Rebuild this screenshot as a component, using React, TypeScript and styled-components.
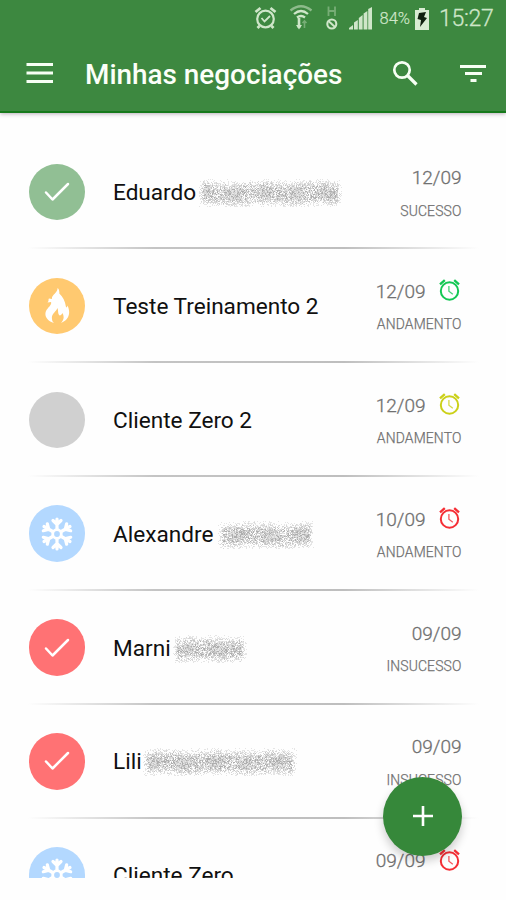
import React from "react";
import styled, { createGlobalStyle } from "styled-components";

const Global = createGlobalStyle`
  * { box-sizing: border-box; }
  body { margin: 0; background: #fff; font-family: Roboto, sans-serif; }
  svg { display: block; flex: none; }
`;

const Screen = styled.div`
  position: relative;
  width: 506px;
  height: 900px;
  overflow: hidden;
  background: #fefefe;
`;

const Header = styled.header`
  height: 113px;
  background: #3d8840;
  border-bottom: 2px solid #177a1c;
  box-shadow: 0 1px 4px rgba(60, 30, 60, 0.35);
`;

const StatusBar = styled.div`
  display: flex;
  align-items: center;
  height: 37px;
  padding-left: 253px;
  color: #cfe6c9;
`;

const Battery = styled.span`
  width: 32px;
  margin-left: 4.5px;
  font-size: 16.5px;
  font-weight: 300;
  -webkit-text-stroke: 0.2px #cfe6c9;
  white-space: nowrap;
`;

const BatteryIcon = styled.svg`
  margin-left: 3px;
`;

const Clock = styled.span`
  margin-left: 10.5px;
  font-size: 23px;
  font-weight: 300;
  -webkit-text-stroke: 0.3px #cfe6c9;
  letter-spacing: -0.3px;
`;

const Toolbar = styled.div`
  display: flex;
  align-items: center;
  height: 74px;
  padding-left: 26px;
`;

const Title = styled.h1`
  width: 306px;
  margin: 2px 0 0 32px;
  color: #fbfff8;
  font-size: 27.9px;
  line-height: 32px;
  font-weight: 500;
  white-space: nowrap;
`;

const SearchSlot = styled.div`
  width: 69px;
`;

const List = styled.main`
  height: 765px;
  padding-top: 22.6px;
  overflow: hidden;
`;

const Row = styled.article`
  display: grid;
  grid-template-columns: 56.5px 1fr auto;
  column-gap: 28px;
  align-items: center;
  height: 113.9px;
  padding: 0 44.5px 0 28.5px;
  background: linear-gradient(90deg, transparent 0, #c4c4c4 28%, #bebebe 70%, transparent 100%) 28px 100% / 451px 2px no-repeat;
`;

const Avatar = styled.div<{ $color: string }>`
  display: grid;
  place-items: center;
  width: 56.5px;
  height: 56.5px;
  margin-top: -1px;
  border-radius: 50%;
  background: ${(p) => p.$color};
`;

const Name = styled.div`
  display: flex;
  align-items: center;
  padding-top: 1px;
  color: #101010;
  font-size: 22.6px;
  line-height: 30px;
  white-space: nowrap;
`;

const Redaction = styled.span<{ $gap: number }>`
  margin-left: ${(p) => p.$gap}px;
`;

const Meta = styled.div`
  display: flex;
  flex-direction: column;
  align-items: flex-end;
  padding-top: 3px;
  color: #707070;
`;

const When = styled.div`
  display: flex;
  align-items: center;
  gap: 11px;
  height: 32px;
  font-size: 19px;
  font-weight: 300;
  -webkit-text-stroke: 0.3px #707070;
`;

const State = styled.div`
  height: 33px;
  font-size: 13.9px;
  font-weight: 300;
  -webkit-text-stroke: 0.25px #707070;
  line-height: 34px;
  letter-spacing: 0.15px;
`;

const Fab = styled.button`
  position: absolute;
  left: 383px;
  top: 776.5px;
  display: grid;
  place-items: center;
  width: 79px;
  height: 79px;
  padding: 0;
  border: 0;
  border-radius: 50%;
  background: #36883a;
  box-shadow: 0 5px 10px rgba(0, 0, 0, 0.2);
`;

const Check = () => (
  <svg width="28" height="22" viewBox="0 0 28 22" fill="none" stroke="#fff" strokeWidth="2.5" strokeLinecap="round" strokeLinejoin="round">
    <path d="M3 11.500 9.500 18.500 25 3" />
  </svg>
);

const Flame = () => (
  <svg width="26" height="36" viewBox="0 0 26 36" fill="#fff">
    <path d="M13.500 0C15 1 15.500 3 15.300 5.500C19 9 21 13 22 19C22.500 20 23.300 19 23.500 17.500C27 25 25 32 17 35C20.500 31 20 28 18.500 25C17.500 27 16 28 15 27C13.500 25 14.500 22 13.500 20C12 24 7 26 8 31C8 33 9 34 10 35C3 33 0 28 2 23C4 19 8 17 7 14L3.500 14.500C5.500 12.500 3.800 11.500 5 10.500L8 11C7 7 14 5 13.500 0Z" />
  </svg>
);

const Snow = () => (
  <svg width="34" height="34" viewBox="-17 -17 34 34" fill="none" stroke="#fff" strokeWidth="3.2" strokeLinecap="round">
    <circle r="4.300" strokeWidth="2.800" />
    {[0, 60, 120, 180, 240, 300].map((a) => (
      <path key={a} transform={`rotate(${a})`} d="M0-5V-15M-4-13.500 0-9.500 4-13.500" />
    ))}
  </svg>
);

const Alarm = ({ color }: { color: string }) => (
  <svg width="25" height="28" viewBox="0 0 25 28" fill="none" stroke={color}>
    <circle cx="12.500" cy="14" r="8.700" strokeWidth="2" />
    <path d="M3 7.300 7.800 3.200M22 7.300 17.200 3.200" strokeWidth="2.400" />
    <path d="M11.900 9V14.300L15.800 17.300" strokeWidth="1.300" opacity=".8" />
  </svg>
);

/* Pixel grain that hides a surname; a fixed seed keeps each smudge stable. */
const Grain = ({ width, height, seed }: { width: number; height: number; seed: number }) => {
  let s = seed * 7919;
  const rnd = () => {
    s = (s * 1664525 + 1013904223) % 4294967296;
    return s / 4294967296;
  };
  const layers = ["", "", "", ""];
  for (let y = 0; y < height; y++) {
    for (let x = 0; x < width; x++) {
      const shift = 0.8 * Math.sin(x / 9 + seed);
      const dy = Math.abs(y - height / 2 + shift) / (height / 2);
      const edge = Math.max(0, 1 - dy ** 2.2) * Math.min(1, (Math.min(x, width - 1 - x) + 1) / 6);
      const wave = 0.88 + 0.12 * Math.sin(x / 5 + seed);
      const tone = rnd() * edge;
      if (rnd() < edge * wave + 0.05) layers[Math.floor(tone * 4)] += `M${x} ${y}h1v1h-1z`;
    }
  }
  return (
    <svg width={width} height={height}>
      {layers.map((d, i) => (
        <path key={i} d={d} fill="#505050" opacity={[0.14, 0.23, 0.33, 0.46][i]} />
      ))}
    </svg>
  );
};

type Kind = "check" | "flame" | "none" | "snow";
type Deal = {
  name: string;
  kind: Kind;
  color: string;
  date: string;
  state: string;
  alarm?: string;
  hidden?: [gap: number, width: number];
};

const deals: Deal[] = [
  { name: "Eduardo", kind: "check", color: "#91bf94", date: "12/09", state: "SUCESSO", hidden: [3, 143] },
  { name: "Teste Treinamento 2", kind: "flame", color: "#ffc970", date: "12/09", state: "ANDAMENTO", alarm: "#13c754" },
  { name: "Cliente Zero 2", kind: "none", color: "#d0d0d0", date: "12/09", state: "ANDAMENTO", alarm: "#cbd018" },
  { name: "Alexandre", kind: "snow", color: "#b3d8ff", date: "10/09", state: "ANDAMENTO", alarm: "#f52e35", hidden: [5, 96] },
  { name: "Marni", kind: "check", color: "#ff7274", date: "09/09", state: "INSUCESSO", hidden: [2, 74] },
  { name: "Lili", kind: "check", color: "#ff7274", date: "09/09", state: "INSUCESSO", hidden: [1, 154] },
  { name: "Cliente Zero", kind: "snow", color: "#b3d8ff", date: "09/09", state: "ANDAMENTO", alarm: "#f52e35" },
];

const icons: Record<Kind, React.ReactNode> = {
  check: <Check />,
  flame: <Flame />,
  none: null,
  snow: <Snow />,
};

export default function App() {
  return (
    <>
      <Global />
      <Screen>
        <Header>
          <StatusBar>
            <svg width="122" height="37" viewBox="0 0 122 37" fill="none" stroke="#cfe6c9">
              <circle cx="12.500" cy="19" r="8.300" strokeWidth="2.200" />
              <path d="M2.500 12 7.500 8M22.500 12 17.500 8M6.500 26 4.500 28M18.500 26 20.500 28" strokeWidth="2.800" />
              <path d="M8.500 18 11.500 21.500 17 16" strokeWidth="1.800" />
              <g strokeWidth="2.300">
                <path d="M37.500 10.500Q48 2 58.500 10.500" opacity=".55" />
                <path d="M41 14Q48 8 55 14" />
                <path d="M44 17.500Q48 14.500 52 17.500" />
              </g>
              <path d="M46 18V28" strokeWidth="2.600" />
              <path d="M43 25H49L46 29.500Z" fill="#cfe6c9" stroke="none" />
              <path d="M51.500 28V21M49.500 23 51.500 21 53.500 23" strokeWidth="1.600" opacity=".4" />
              <path d="M75.500 6.500V16M82 6.500V16M75.500 11H82" strokeWidth="1.800" opacity=".4" />
              <circle cx="78.800" cy="24" r="4.500" strokeWidth="2.100" />
              <path d="M75.500 21 82 27" strokeWidth="1.900" />
              <g fill="#cfe6c9" stroke="none">
                <path d="M96 29.500V28L100 25V29.500Z" />
                <path d="M101 29.500V22.500L104.800 20V29.500Z" />
                <path d="M105.800 29.500V18L109.600 15V29.500Z" />
                <path d="M110.600 29.500V13.500L114.400 11V29.500Z" />
                <path d="M115.200 29.500V9L119 7V29.500Z" />
              </g>
            </svg>
            <Battery>84%</Battery>
            <BatteryIcon width="14" height="24" viewBox="0 0 14 24">
              <path d="M4 1H10V3H14V23H0V3H4Z" fill="#d9ecd3" />
              <path d="M4 6 11 5 9 10 12 11 5 20 6 13 2.500 12Z" fill="#10200f" />
            </BatteryIcon>
            <Clock>15:27</Clock>
          </StatusBar>
          <Toolbar>
            <svg width="27" height="22" viewBox="0 0 27 22">
              <path d="M.5 1.500H27M.5 10H27M.5 18.500H27" stroke="#f7fff4" strokeWidth="2.800" />
            </svg>
            <Title>Minhas negociações</Title>
            <SearchSlot>
              <svg width="28" height="28" viewBox="0 0 28 28" fill="none" stroke="#f7fff4">
                <circle cx="11" cy="10" r="7.700" strokeWidth="2.700" />
                <path d="M16.500 15.500 25.500 24.500" strokeWidth="3.200" />
              </svg>
            </SearchSlot>
            <svg width="27" height="20" viewBox="0 0 27 20">
              <path d="M0 2.500H26M5 9.500H22M10.500 16.500H16.500" stroke="#f7fff4" strokeWidth="2.800" />
            </svg>
          </Toolbar>
        </Header>
        <List>
          {deals.map((d, i) => (
            <Row key={i}>
              <Avatar $color={d.color}>{icons[d.kind]}</Avatar>
              <Name>
                {d.name}
                {d.hidden && (
                  <Redaction $gap={d.hidden[0]}>
                    <Grain width={d.hidden[1]} height={28} seed={i + 1} />
                  </Redaction>
                )}
              </Name>
              <Meta>
                <When>
                  {d.date}
                  {d.alarm && <Alarm color={d.alarm} />}
                </When>
                <State>{d.state}</State>
              </Meta>
            </Row>
          ))}
        </List>
        <Fab aria-label="Adicionar">
          <svg width="22" height="22" viewBox="0 0 22 22">
            <path d="M11 1V21M1 11H21" stroke="#fff" strokeWidth="2.600" />
          </svg>
        </Fab>
      </Screen>
    </>
  );
}
